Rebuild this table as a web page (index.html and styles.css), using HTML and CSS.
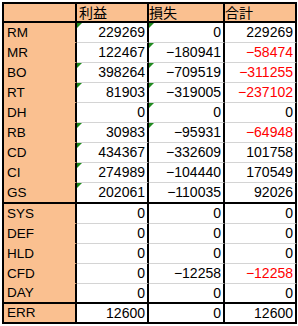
FILE: index.html
```html
<!DOCTYPE html>
<html lang="ja">
<head>
<meta charset="utf-8">
<link rel="stylesheet" href="styles.css">
</head>
<body>
<table class="sheet">
  <thead>
    <tr class="hdr">
      <th class="lbl"></th>
      <th class="cb">利益</th>
      <th class="cc">損失</th>
      <th class="cd">合計</th>
    </tr>
  </thead>
  <tbody>
    <tr><td class="lbl">RM</td><td class="cb num tri">229269</td><td class="cc num tri">0</td><td class="cd num">229269</td></tr>
    <tr><td class="lbl">MR</td><td class="cb num">122467</td><td class="cc num tri">−180941</td><td class="cd num neg">−58474</td></tr>
    <tr><td class="lbl">BO</td><td class="cb num tri">398264</td><td class="cc num tri">−709519</td><td class="cd num neg">−311255</td></tr>
    <tr><td class="lbl">RT</td><td class="cb num tri">81903</td><td class="cc num tri">−319005</td><td class="cd num neg">−237102</td></tr>
    <tr><td class="lbl">DH</td><td class="cb num">0</td><td class="cc num tri">0</td><td class="cd num">0</td></tr>
    <tr><td class="lbl">RB</td><td class="cb num tri">30983</td><td class="cc num tri">−95931</td><td class="cd num neg">−64948</td></tr>
    <tr><td class="lbl">CD</td><td class="cb num tri">434367</td><td class="cc num">−332609</td><td class="cd num">101758</td></tr>
    <tr><td class="lbl">CI</td><td class="cb num tri">274989</td><td class="cc num">−104440</td><td class="cd num">170549</td></tr>
    <tr class="grp-end"><td class="lbl">GS</td><td class="cb num tri">202061</td><td class="cc num">−110035</td><td class="cd num">92026</td></tr>
    <tr><td class="lbl">SYS</td><td class="cb num">0</td><td class="cc num">0</td><td class="cd num">0</td></tr>
    <tr><td class="lbl">DEF</td><td class="cb num">0</td><td class="cc num">0</td><td class="cd num">0</td></tr>
    <tr><td class="lbl">HLD</td><td class="cb num">0</td><td class="cc num">0</td><td class="cd num">0</td></tr>
    <tr><td class="lbl">CFD</td><td class="cb num">0</td><td class="cc num">−12258</td><td class="cd num neg">−12258</td></tr>
    <tr class="grp-end short"><td class="lbl">DAY</td><td class="cb num">0</td><td class="cc num">0</td><td class="cd num">0</td></tr>
    <tr class="grp-end short"><td class="lbl">ERR</td><td class="cb num">12600</td><td class="cc num">0</td><td class="cd num">12600</td></tr>
  </tbody>
</table>
</body>
</html>
```
FILE: styles.css
```css
html, body {
  margin: 0;
  padding: 0;
  background: #ffffff;
}

body {
  padding: 2px 0 0 2px;
  font-family: "Liberation Sans", "Noto Sans CJK JP", sans-serif;
  color: #000000;
}

.sheet {
  border-collapse: separate;
  border-spacing: 0;
  table-layout: fixed;
  border-top: 2px solid #000;
  border-left: 2px solid #000;
}

.sheet th,
.sheet td {
  padding: 0;
  box-sizing: content-box;
  border-right: 2px solid #000;
  border-bottom: 1px solid #d4d4d4;
  height: 19px;
  line-height: 19px;
  overflow: visible;
  white-space: nowrap;
}

.lbl { width: 70px; }
.cb { width: 70px; }
.cc { width: 74px; }
.cd { width: 70px; }

.hdr th {
  background: #fac090;
  height: 17px;
  line-height: 17px;
  border-bottom: 2px solid #000;
  font-family: "Noto Sans CJK JP", sans-serif;
  font-weight: normal;
  font-size: 14px;
  text-align: left;
  vertical-align: bottom;
  padding-left: 1px;
}

.hdr th.cb { padding-left: 2px; width: 68px; }
.hdr th.cd { padding-left: 0; }
.hdr th.cc { padding-left: 0; }

td.lbl {
  background: #fac090;
  border-bottom-color: #fac090;
  font-size: 13.5px;
  padding-left: 3px;
  width: 67px;
  vertical-align: bottom;
}

td.num {
  font-size: 14px;
  text-align: right;
  padding-right: 2px;
  vertical-align: bottom;
  position: relative;
}

td.cb.num { width: 68px; }
td.cc.num { width: 72px; }
td.cd.num { width: 68px; }

.neg { color: #ff0000; }

.grp-end td,
.grp-end td.lbl {
  border-bottom: 2px solid #000;
}

.short td {
  height: 18px;
  line-height: 18px;
}

.tri::before {
  content: "";
  position: absolute;
  left: 0;
  top: 0;
  width: 5px;
  height: 5px;
  background: #1f8a1f;
  clip-path: polygon(0 0, 100% 0, 0 100%);
}
```
